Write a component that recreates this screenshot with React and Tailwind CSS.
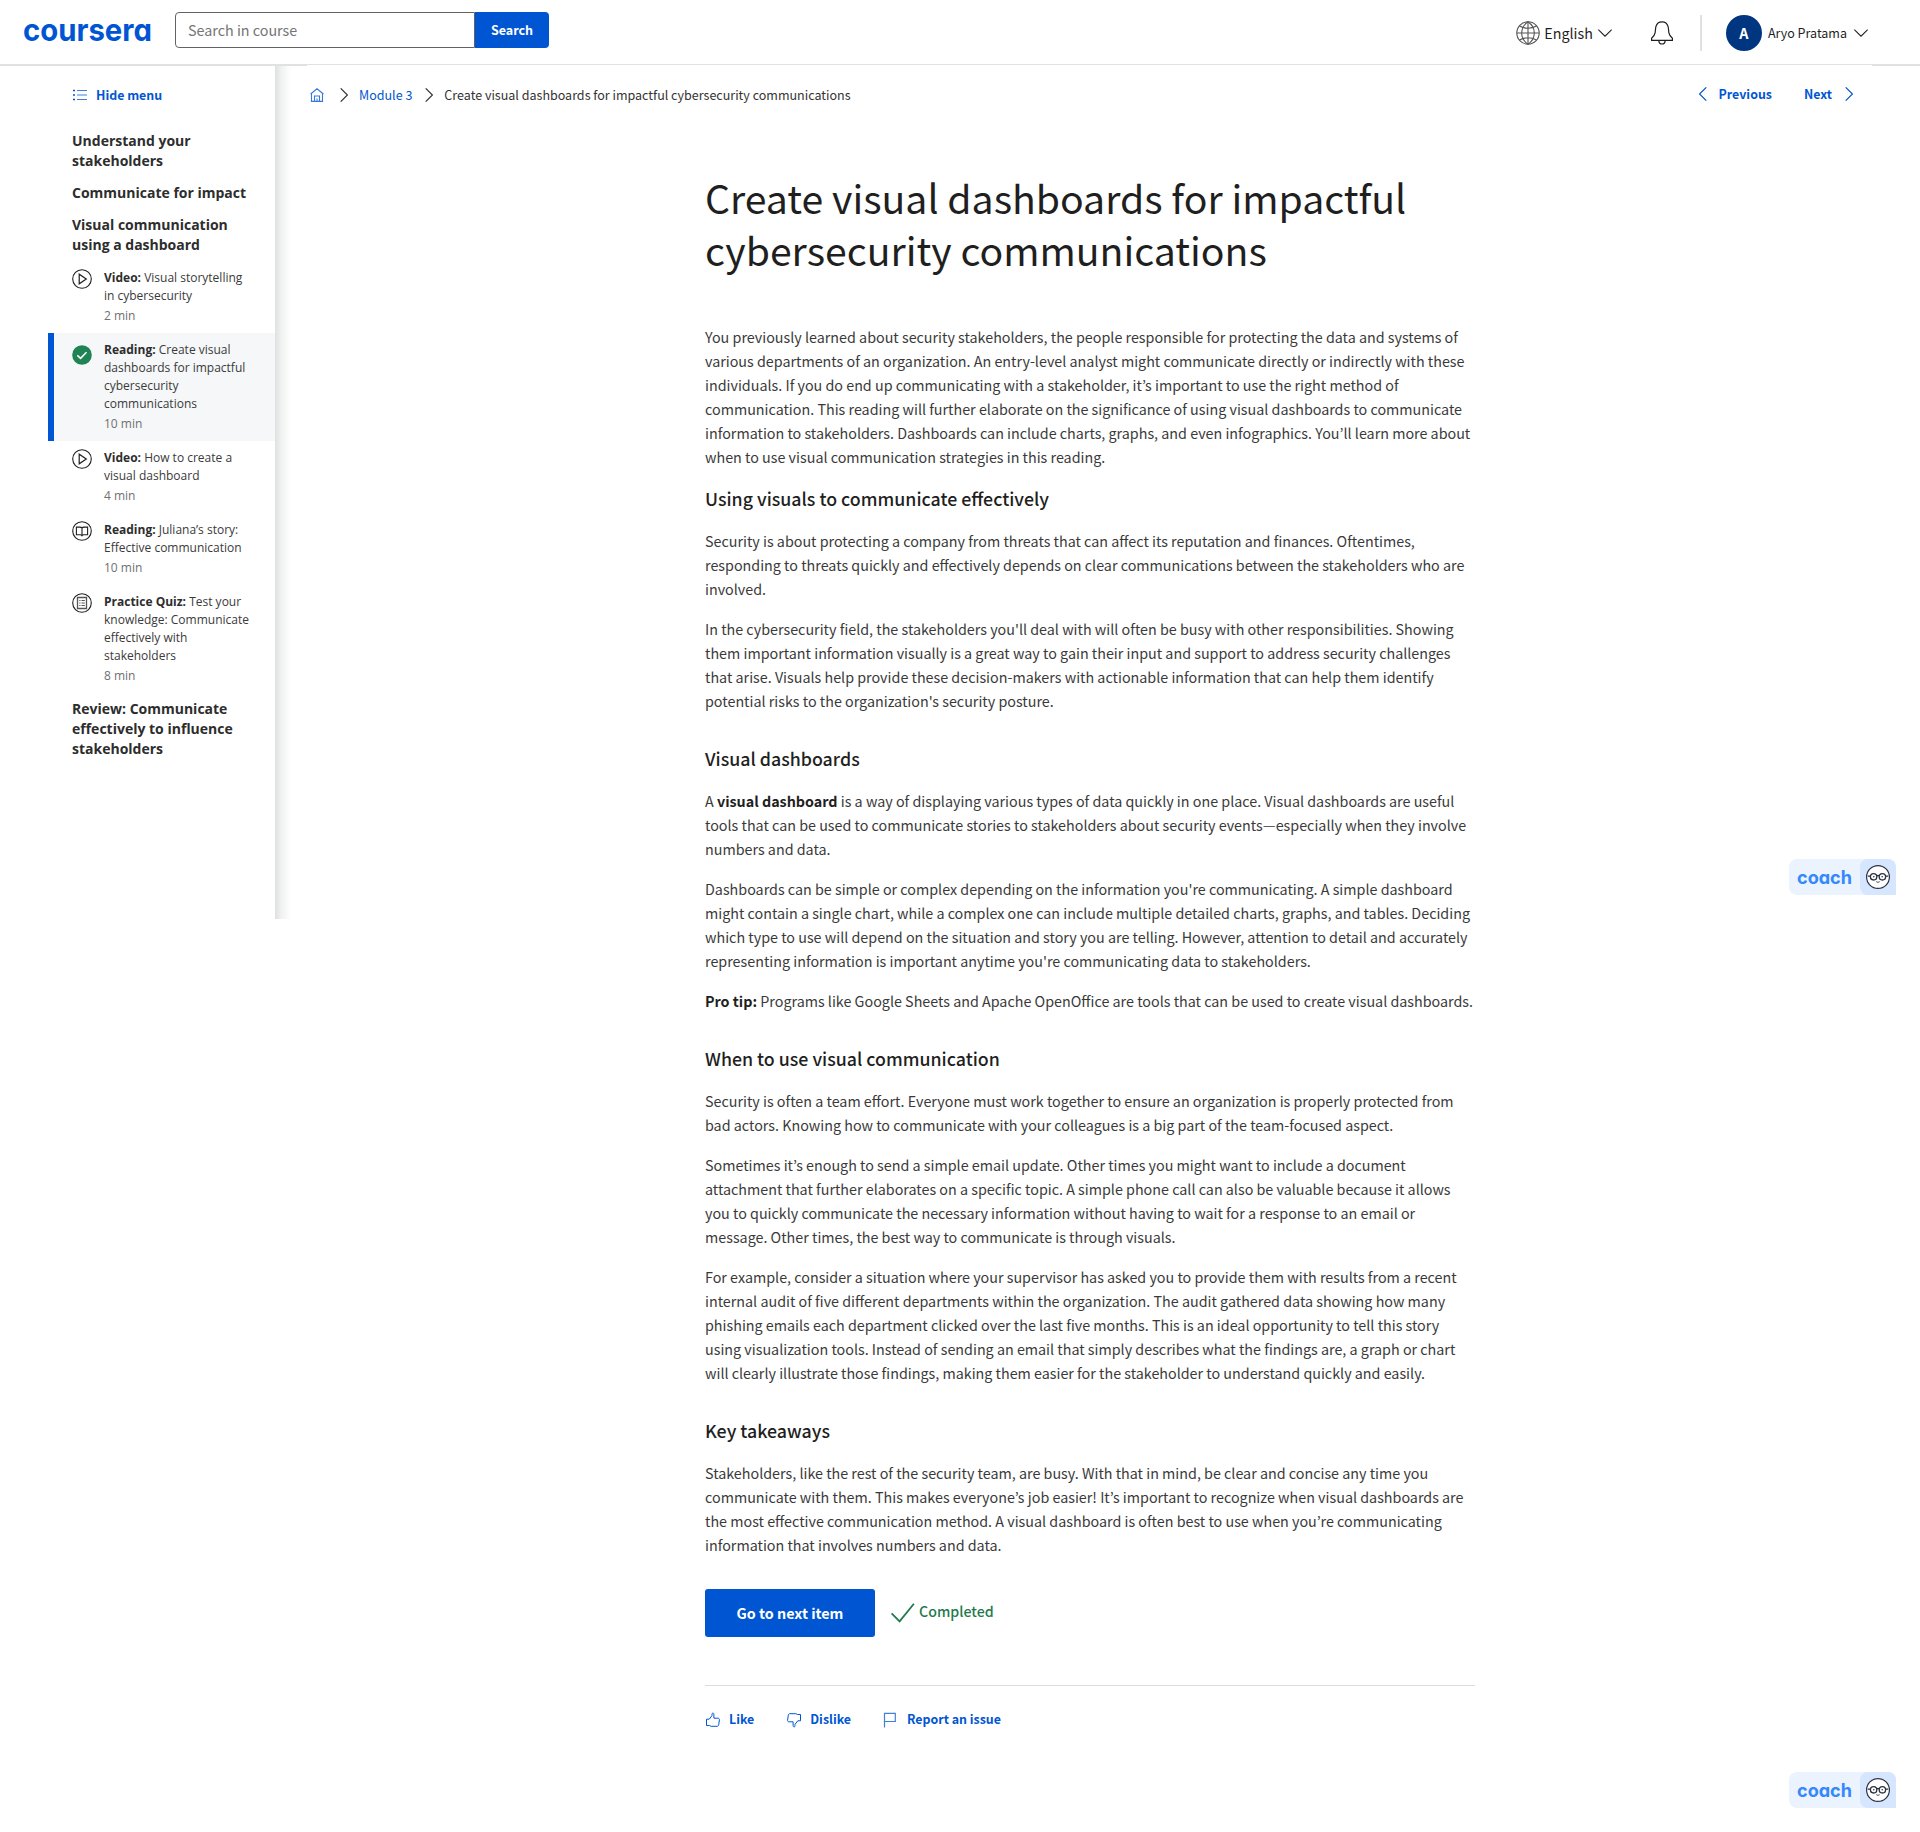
const SANS = "font-['Noto_Sans_CJK_KR','Open_Sans',sans-serif]";

function Chevron({ dir, className = "", w = 8, h = 14 }) {
  const d = {
    right: "M0.7 0.3L7.4 7L0.7 13.7",
    left: "M7.3 0.3L0.6 7L7.3 13.7",
    down: "M0.3 0.6L7 7.2L13.7 0.6",
  }[dir];
  return (
    <svg className={`shrink-0 ${className}`} width={w} height={h} viewBox={`0 0 ${w} ${h}`} fill="none" stroke="currentColor" strokeWidth="1.1">
      <path d={d} />
    </svg>
  );
}

function Wordmark({ text, width, height, size, baseline, weight, className }) {
  return (
    <svg className={`shrink-0 overflow-visible ${className}`} width={width} height={height}>
      <text
        x="0"
        y={baseline}
        fontSize={size}
        fontWeight={weight}
        textLength={width}
        lengthAdjust="spacingAndGlyphs"
        fill="currentColor"
        className="font-['Inter',sans-serif] [font-feature-settings:'cv11'_1]"
      >
        {text}
      </text>
    </svg>
  );
}

function Header() {
  return (
    <header className="relative flex h-[65px] shrink-0 items-start border-b border-[#e1e1e1] text-[#1f1f1f]">
      <Wordmark text="coursera" width={129} height={20} size={31} baseline={18} weight={700} className="mt-[23px] ml-[23px] text-[#0056d2]" />
      <div className="mt-3 ml-[23px] flex h-9 w-[374px]">
        <div className="flex flex-1 items-center rounded-l border border-[#636363] pl-3 text-[14.32px] text-[#757575]">
          Search in course
        </div>
        <button className="w-[74px] rounded-r bg-[#0056d2] text-[12.53px] font-bold text-white">Search</button>
      </div>
      <div className="mt-[15px] ml-auto flex h-9 items-center">
        <svg width="24" height="24" viewBox="0 0 24 24" fill="none" stroke="#555" strokeWidth="1.1">
          <circle cx="12" cy="12" r="11.2" />
          <path d="M12 .8v22.400M.8 12h22.400M3.400 5.100C8.500 7.700 15.500 7.700 20.600 5.100M3.400 18.900c5.100-2.600 12.100-2.600 17.200 0" />
          <path d="M12 .8C3.600 6.500 3.600 17.500 12 23.200M12 .8c8.400 5.700 8.400 16.700 0 22.400" />
        </svg>
        <span className="ml-1 text-[14.32px]">English</span>
        <Chevron dir="down" w={14} h={8} className="ml-[5px]" />
        <svg className="ml-[38px]" width="24" height="24" viewBox="0 0 24 24" fill="none" stroke="#1f1f1f" strokeWidth="1.2">
          <path d="M1.600 19.400h20.800v-2.200c-1.900-1.500-3-2.900-3.500-5.400-.4-2.300-.3-4.300-.8-6.200C17.300 2.500 15.200.9 12 .9S6.700 2.500 5.900 5.600c-.5 1.900-.4 3.900-.8 6.200-.5 2.500-1.600 3.900-3.500 5.400z" />
          <path d="M8.800 19.600c.2 2.200 1.400 3.400 3.200 3.400s3-1.200 3.200-3.400" />
        </svg>
        <span className="ml-[26px] h-9 w-[2px] bg-[#e1e1e1]" />
        <span className="ml-6 flex h-9 w-9 items-center justify-center rounded-full bg-[#003580] text-[14.32px] font-bold text-white">A</span>
        <span className="ml-1.5 text-[12.53px]">Aryo Pratama</span>
        <Chevron dir="down" w={14} h={8} className="mr-[52px] ml-[7px]" />
      </div>
      <span className="absolute top-[65px] left-0 h-px w-[307px] bg-[#e1e1e1]" />
      <span className="absolute top-[65px] right-0 h-px w-12 bg-[#e1e1e1]" />
    </header>
  );
}

const ring = <circle cx="10" cy="10" r="9.300" />;
const ITEM_ICONS = {
  video: (
    <svg width="20" height="20" viewBox="0 0 20 20" fill="none" stroke="#1f1f1f" strokeWidth="1.1">
      {ring}
      <path d="M7.200 5.200v9.600L14.300 10z" strokeWidth="1.2" />
    </svg>
  ),
  reading: (
    <svg width="20" height="20" viewBox="0 0 20 20" fill="none" stroke="#1f1f1f" strokeWidth="1.1">
      {ring}
      <path d="M10 7c-.5-.7-1.400-.9-2.200-.9H4.400v7.700h3.800c.8 0 1.400.3 1.800.9.400-.6 1-.9 1.800-.9h3.800V6.100h-3.400c-.8 0-1.700.2-2.200.9zM10 7v7.500" />
    </svg>
  ),
  quiz: (
    <svg width="20" height="20" viewBox="0 0 20 20" fill="none" stroke="#1f1f1f" strokeWidth="1.1">
      {ring}
      <path d="M5.500 4.500h9v11h-9z" stroke="#555" strokeWidth="1.300" />
      <path d="M7.300 7.500h1.200M9.500 7.500h3.300M7.300 10h1.200M9.500 10h3.300M7.300 12.500h1.200M9.500 12.500h3.300" stroke="#555" />
    </svg>
  ),
  done: (
    <svg width="20" height="20" viewBox="0 0 20 20" fill="none">
      <circle cx="10" cy="10" r="9.800" fill="#1f8354" />
      <path d="M5.300 10.300l3.300 3 5.900-6" stroke="#fff" strokeWidth="1.600" />
    </svg>
  ),
};

const ITEMS = [
  { icon: "video", kind: "Video:", lines: ["Visual storytelling", "in cybersecurity"], time: "2 min" },
  { icon: "done", kind: "Reading:", lines: ["Create visual", "dashboards for impactful", "cybersecurity", "communications"], time: "10 min", active: true },
  { icon: "video", kind: "Video:", lines: ["How to create a", "visual dashboard"], time: "4 min" },
  { icon: "reading", kind: "Reading:", lines: ["Juliana’s story:", "Effective communication"], time: "10 min" },
  { icon: "quiz", kind: "Practice Quiz:", lines: ["Test your", "knowledge: Communicate", "effectively with", "stakeholders"], time: "8 min" },
];

function Lines({ lines }) {
  return lines.map((line, i) => (
    <span key={i}>
      {i > 0 && <br />}
      {line}
    </span>
  ));
}

function Sidebar() {
  return (
    <aside className="flex h-[854px] w-[291px] shrink-0">
      <div className="flex w-[275px] flex-col pt-5 font-['Open_Sans',sans-serif] text-[#2d2d2d]">
        <div className={`flex h-5 items-center pl-[73px] text-[#0056d2] ${SANS}`}>
          <svg width="14" height="12" viewBox="0 0 14 12" fill="none" stroke="currentColor" strokeWidth="1.1">
            <path d="M0 1.500h2M0 6h2M0 10.500h2" strokeWidth="1.600" />
            <path d="M4 1.500h10M4 6h10M4 10.500h10" opacity=".75" />
          </svg>
          <span className="ml-[9px] text-[12.4px] font-bold">Hide menu</span>
        </div>
        <nav className="mt-[26px] flex flex-col whitespace-nowrap">
          <h3 className="mb-3 pl-[72px] text-sm leading-5 font-bold">Understand your<br />stakeholders</h3>
          <h3 className="mb-3 pl-[72px] text-sm leading-5 font-bold">Communicate for impact</h3>
          <h3 className="mb-1.5 pl-[72px] text-sm leading-5 font-bold">Visual communication<br />using a dashboard</h3>
          {ITEMS.map((it, i) => (
            <div
              key={i}
              className={`ml-12 flex border-l-6 py-2 pl-[18px] ${it.active ? "border-[#0056d2] bg-[#f5f7f8]" : "border-transparent"}`}
            >
              <span className={`w-8 shrink-0 ${it.active ? "pt-1" : ""}`}>{ITEM_ICONS[it.icon]}</span>
              <div className="text-xs leading-[18px] text-[#3a3a3a]">
                <p><b className="text-[#2d2d2d]">{it.kind}</b> <Lines lines={it.lines} /></p>
                <p className="mt-0.5 text-[#707070]">{it.time}</p>
              </div>
            </div>
          ))}
          <h3 className="mt-1.5 pl-[72px] text-sm leading-5 font-bold">Review: Communicate<br />effectively to influence<br />stakeholders</h3>
        </nav>
      </div>
      <div className="w-4 bg-linear-to-r from-[#dfe1e1] via-[#f0f1f1] via-40% to-white" />
    </aside>
  );
}

function TopNav() {
  return (
    <div className="flex h-[60px] items-center pr-[67px] pl-[19px] text-[12.53px] text-[#333]">
      <svg width="14" height="14" viewBox="0 0 14 14" fill="none" stroke="#0056d2" strokeOpacity=".8" strokeWidth="1.100">
        <path d="M.6 6L7 .8 13.400 6M1.500 5.500v7.900h11V5.500M4.500 13.400V8h5v5.400M7 10.500v3" />
      </svg>
      <Chevron dir="right" className="ml-4" />
      <span className="ml-[11px] text-[#0056d2]">Module 3</span>
      <Chevron dir="right" className="ml-[13px]" />
      <span className="ml-[11px]">Create visual dashboards for impactful cybersecurity communications</span>
      <div className="ml-auto flex items-center pb-[2px] font-bold text-[#0056d2]">
        <Chevron dir="left" />
        <span className="ml-3 text-[12.4px]">Previous</span>
        <span className="ml-8 text-[12.4px]">Next</span>
        <Chevron dir="right" className="ml-[13px]" />
      </div>
    </div>
  );
}

const P = ({ lines, children, className = "mt-4" }) => (
  <p className={`text-[14.32px] leading-6 whitespace-nowrap ${className}`}>
    {children}
    <Lines lines={lines} />
  </p>
);

const H = ({ children, className = "mt-8" }) => (
  <h2 className={`pb-0.5 text-[17.8px] leading-[26px] font-medium text-[#1f1f1f] ${className}`}>{children}</h2>
);

function Article() {
  return (
    <main className="ml-[414px] w-[770px] pt-[46px] text-[#3a3a3a]">
      <h1 className="text-[39.2px] leading-[52px] whitespace-nowrap text-[#1f1f1f]">
        Create visual dashboards for impactful<br />cybersecurity communications
      </h1>
      <P className="mt-[50px]" lines={[
        "You previously learned about security stakeholders, the people responsible for protecting the data and systems of",
        "various departments of an organization. An entry-level analyst might communicate directly or indirectly with these",
        "individuals. If you do end up communicating with a stakeholder, it’s important to use the right method of",
        "communication. This reading will further elaborate on the significance of using visual dashboards to communicate",
        "information to stakeholders. Dashboards can include charts, graphs, and even infographics. You’ll learn more about",
        "when to use visual communication strategies in this reading.",
      ]} />
      <H className="mt-4">Using visuals to communicate effectively</H>
      <P lines={[
        "Security is about protecting a company from threats that can affect its reputation and finances. Oftentimes,",
        "responding to threats quickly and effectively depends on clear communications between the stakeholders who are",
        "involved.",
      ]} />
      <P lines={[
        "In the cybersecurity field, the stakeholders you'll deal with will often be busy with other responsibilities. Showing",
        "them important information visually is a great way to gain their input and support to address security challenges",
        "that arise. Visuals help provide these decision-makers with actionable information that can help them identify",
        "potential risks to the organization's security posture.",
      ]} />
      <H>Visual dashboards</H>
      <P lines={[
        " is a way of displaying various types of data quickly in one place. Visual dashboards are useful",
        "tools that can be used to communicate stories to stakeholders about security events—especially when they involve",
        "numbers and data.",
      ]}>A <b className="text-[#1f1f1f]">visual dashboard</b></P>
      <P lines={[
        "Dashboards can be simple or complex depending on the information you're communicating. A simple dashboard",
        "might contain a single chart, while a complex one can include multiple detailed charts, graphs, and tables. Deciding",
        "which type to use will depend on the situation and story you are telling. However, attention to detail and accurately",
        "representing information is important anytime you're communicating data to stakeholders.",
      ]} />
      <P lines={[" Programs like Google Sheets and Apache OpenOffice are tools that can be used to create visual dashboards."]}>
        <b className="text-[#1f1f1f]">Pro tip:</b>
      </P>
      <H>When to use visual communication</H>
      <P lines={[
        "Security is often a team effort. Everyone must work together to ensure an organization is properly protected from",
        "bad actors. Knowing how to communicate with your colleagues is a big part of the team-focused aspect.",
      ]} />
      <P lines={[
        "Sometimes it’s enough to send a simple email update. Other times you might want to include a document",
        "attachment that further elaborates on a specific topic. A simple phone call can also be valuable because it allows",
        "you to quickly communicate the necessary information without having to wait for a response to an email or",
        "message. Other times, the best way to communicate is through visuals.",
      ]} />
      <P lines={[
        "For example, consider a situation where your supervisor has asked you to provide them with results from a recent",
        "internal audit of five different departments within the organization. The audit gathered data showing how many",
        "phishing emails each department clicked over the last five months. This is an ideal opportunity to tell this story",
        "using visualization tools. Instead of sending an email that simply describes what the findings are, a graph or chart",
        "will clearly illustrate those findings, making them easier for the stakeholder to understand quickly and easily.",
      ]} />
      <H>Key takeaways</H>
      <P lines={[
        "Stakeholders, like the rest of the security team, are busy. With that in mind, be clear and concise any time you",
        "communicate with them. This makes everyone’s job easier! It’s important to recognize when visual dashboards are",
        "the most effective communication method. A visual dashboard is often best to use when you’re communicating",
        "information that involves numbers and data.",
      ]} />
      <div className="mt-8 flex h-12 items-center">
        <button className="h-12 w-[170px] rounded-[3px] bg-[#0056d2] text-[14.32px] font-bold text-white">Go to next item</button>
        <svg className="ml-[16px]" width="24" height="20" viewBox="0 0 24 20" fill="none" stroke="#1f7a4d" strokeWidth="1.800">
          <path d="M.6 10.400l8 8L22.900.8" />
        </svg>
        <span className="mb-[3px] ml-1 text-[14.2px] font-medium text-[#1f7a4d]">Completed</span>
      </div>
      <div className="mt-12 flex h-[68px] items-center border-t border-[#dcdcdc] text-[12.4px] font-bold text-[#0056d2]">
        <svg width="16" height="16" viewBox="0 0 16 16" fill="none" stroke="currentColor" strokeWidth="1">
          <path d="M1.500 7.200h2.700L7 3.600V2.200C7 .6 8.900.7 8.900 2.400v3.800h4c1.100 0 1.600.6 1.500 1.600l-.7 5c-.1.900-.7 1.500-1.600 1.500H6.200l-1.800-.8H1.500z" />
        </svg>
        <span className="ml-2">Like</span>
        <svg className="ml-8 rotate-180" width="16" height="16" viewBox="0 0 16 16" fill="none" stroke="currentColor" strokeWidth="1">
          <path d="M1.500 7.200h2.700L7 3.600V2.200C7 .6 8.900.7 8.900 2.400v3.800h4c1.100 0 1.600.6 1.500 1.600l-.7 5c-.1.900-.7 1.500-1.600 1.500H6.200l-1.800-.8H1.500z" />
        </svg>
        <span className="ml-2">Dislike</span>
        <svg className="ml-8" width="16" height="16" viewBox="0 0 16 16" fill="none" stroke="currentColor" strokeOpacity=".75" strokeWidth="1.200">
          <path d="M1.500 15.500V1.300h10.800v8.200H1.500" />
        </svg>
        <span className="ml-2">Report an issue</span>
      </div>
    </main>
  );
}

function Coach({ className }) {
  return (
    <div className={`absolute right-6 flex h-9 w-[107px] items-center rounded-l-lg rounded-tr-lg bg-[#ebf3ff] ${className}`}>
      <Wordmark text="coach" width={55} height={16} size={18.5} baseline={15} weight={700} className="ml-2 text-[#3587fc]" />
      <span className="ml-auto flex h-9 w-9 items-center justify-center rounded-l-lg rounded-tr-lg bg-[#d6e6ff]">
        <svg width="24" height="24" viewBox="0 0 24 24" fill="none" stroke="#2a3140">
          <circle cx="12" cy="12" r="11.400" fill="#fff" strokeWidth="1.200" />
          <circle cx="7.600" cy="11.800" r="3.200" strokeWidth="1.300" />
          <circle cx="16.400" cy="11.800" r="3.200" strokeWidth="1.300" />
          <path d="M10.600 11c.9-.6 1.900-.6 2.800 0M4.500 11.200H1.800M19.500 11.200h2.700" strokeWidth="1.300" />
          <path d="M10.300 16.600c1 .9 2.400.9 3.400 0" strokeWidth=".9" />
          <circle cx="7.800" cy="11.800" r=".8" fill="#2a3140" stroke="none" />
          <circle cx="16.200" cy="11.800" r=".8" fill="#2a3140" stroke="none" />
        </svg>
      </span>
    </div>
  );
}

export default function App() {
  return (
    <div className={`relative flex h-[1832px] w-[1920px] flex-col overflow-hidden bg-white ${SANS}`}>
      <Header />
      <div className="flex">
        <Sidebar />
        <div className="min-w-0 flex-1">
          <TopNav />
          <Article />
        </div>
      </div>
      <Coach className="top-[859px]" />
      <Coach className="top-[1772px]" />
    </div>
  );
}
